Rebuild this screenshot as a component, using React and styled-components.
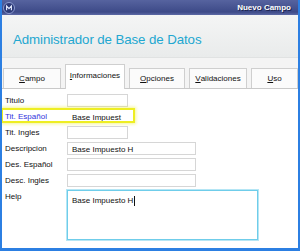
import React from 'react';
import styled, { createGlobalStyle } from 'styled-components';

const GlobalStyle = createGlobalStyle`
    html, body {
        margin: 0;
        padding: 0;
        background: #ffffff;
    }
    body {
        font-family: "Liberation Sans", Arial, sans-serif;
    }
`;

const tabs = [
    { label: 'Campo', width: 58 },
    { label: 'Informaciones', width: 60, active: true },
    { label: 'Opciones', width: 56 },
    { label: 'Validaciones', width: 58 },
    { label: 'Uso', width: 47 },
];

const fields = [
    { label: 'Titulo', size: 'short' },
    { label: 'Tit. Español', size: 'short', value: 'Base Impuest', highlight: true },
    { label: 'Tit. Ingles', size: 'short' },
    { label: 'Descripcion', size: 'long', value: 'Base Impuesto H' },
    { label: 'Des. Español', size: 'long' },
    { label: 'Desc. Ingles', size: 'long' },
];

const App = () => (
    <>
        <GlobalStyle />
        <Window>
            <TitleBar>
                <AppIcon width="12" height="12" viewBox="0 0 12 12">
                    <circle cx="6" cy="6" r="5.5" fill="#2c3a78" stroke="#8d9bd0" strokeWidth="1" />
                    <path d="M3.6 8.2 L3.6 4 L6 6.6 L8.4 4 L8.4 8.2" fill="none" stroke="#e6ecff" strokeWidth="1.1" />
                </AppIcon>
                <WindowTitle>Nuevo Campo</WindowTitle>
            </TitleBar>
            <Header>
                <HeaderTitle>Administrador de Base de Datos</HeaderTitle>
            </Header>
            <TabStrip>
                {tabs.map((tab) => (
                    <Tab key={tab.label} $active={tab.active} $width={tab.width}>
                        <u>{tab.label[0]}</u>{tab.label.slice(1)}
                    </Tab>
                ))}
            </TabStrip>
            <Form>
                {fields.map((field) => (
                    <Row key={field.label} $highlight={field.highlight}>
                        <Label $highlight={field.highlight}>{field.label}</Label>
                        <Input $size={field.size} $bare={field.highlight}>{field.value}</Input>
                    </Row>
                ))}
                <Row>
                    <Label>Help</Label>
                    <HelpBox>
                        Base Impuesto H<Caret />
                    </HelpBox>
                </Row>
            </Form>
        </Window>
    </>
);

export default App;

const Window = styled.div`
    width: 300px;
    height: 251px;
    box-sizing: border-box;
    border-left: 2px solid #2c7fe2;
    border-right: 2px solid #2c7fe2;
    border-bottom: 3px solid #2c7fe2;
    display: flex;
    flex-direction: column;
    overflow: hidden;
    background: #ffffff;
    box-shadow: inset 3px 0 2px -1px #c9c9c9, inset -3px 0 2px -1px #d6d6d6, inset 0 -3px 2px -1px #d6d6d6;
`;

const TitleBar = styled.div`
    height: 15px;
    margin: 0 -2px;
    flex-shrink: 0;
    display: flex;
    align-items: center;
    justify-content: space-between;
    padding: 0 9px 0 3px;
    background: linear-gradient(#56639f, #3d4a88 80%, #5d6aa6);
`;

const AppIcon = styled.svg`
    display: block;
`;

const WindowTitle = styled.span`
    color: #ffffff;
    font-size: 8px;
    font-weight: 700;
    text-shadow: 1px 1px 0 #1c2450;
`;

const Header = styled.div`
    height: 42px;
    flex-shrink: 0;
    display: flex;
    align-items: center;
    padding: 0 0 0 11px;
    background: linear-gradient(#f4f5f5, #e9ebeb);
    border-bottom: 1px solid #e0e2e2;
`;

const HeaderTitle = styled.h1`
    margin: 7px 0 0;
    font-size: 13.3px;
    font-weight: 400;
    color: #22a7d0;
    letter-spacing: -0.1px;
`;

const TabStrip = styled.div`
    height: 30px;
    flex-shrink: 0;
    display: flex;
    align-items: flex-end;
    gap: 4px;
    padding-left: 1px;
    background: #f4f4f4;
    border-bottom: 1px solid #c9c9c9;
`;

const Tab = styled.div`
    width: ${(p) => p.$width}px;
    height: ${(p) => (p.$active ? 25 : 20)}px;
    box-sizing: border-box;
    display: flex;
    align-items: center;
    justify-content: center;
    padding-bottom: ${(p) => (p.$active ? 4 : 0)}px;
    font-size: 8px;
    color: #111111;
    background: ${(p) => (p.$active ? '#ffffff' : '#fbfbfb')};
    border: 1px solid #cfcfcf;
    border-bottom: none;
    margin-bottom: ${(p) => (p.$active ? -1 : 0)}px;

    u {
        text-decoration-thickness: 1px;
    }
`;

const Form = styled.div`
    flex: 1;
    display: flex;
    flex-direction: column;
    padding: 4px 0 0 1px;
    background: #ffffff;
`;

const Row = styled.div`
    position: relative;
    display: flex;
    align-items: flex-start;
    min-height: 16px;

    &::after {
        content: '';
        display: ${(p) => (p.$highlight ? 'block' : 'none')};
        position: absolute;
        left: -2px;
        top: -1px;
        width: 130px;
        height: 11px;
        border: 2px solid #eeee22;
        box-shadow: 0 0 3px 1px rgba(238, 238, 60, 0.55);
    }
`;

const Label = styled.span`
    width: 64px;
    box-sizing: border-box;
    padding: 3px 0 0 2px;
    font-size: 8px;
    color: ${(p) => (p.$highlight ? '#3333dd' : '#111111')};
`;

const Input = styled.div`
    width: ${(p) => (p.$size === 'long' ? 129 : 61)}px;
    height: 13px;
    margin-top: 1px;
    box-sizing: border-box;
    padding: 2px 0 0 4px;
    font-size: 8px;
    color: #111111;
    background: #ffffff;
    border: 1px solid ${(p) => (p.$bare ? 'transparent' : '#d6d6d6')};
`;

const HelpBox = styled.div`
    width: 191px;
    height: 50px;
    margin-top: 1px;
    box-sizing: border-box;
    padding: 5px 0 0 4px;
    font-size: 8px;
    color: #111111;
    border: 1px solid #6fcdea;
    box-shadow: 0 0 0 1px #b5e6f5;
    display: flex;
    align-items: flex-start;
`;

const Caret = styled.span`
    display: inline-block;
    width: 1px;
    height: 10px;
    margin-left: 1px;
    background: #111111;
`;
